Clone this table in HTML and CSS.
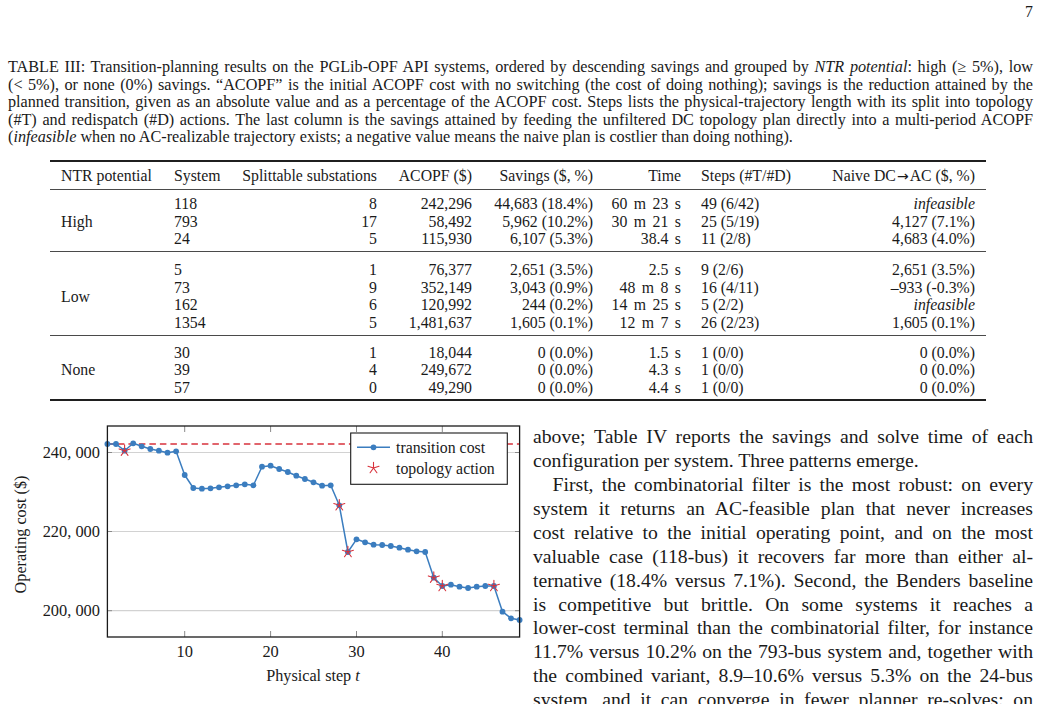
FILE: index.html
```html
<!DOCTYPE html>
<html lang="en">
<head>
<meta charset="utf-8">
<title>Table III</title>
<link rel="stylesheet" href="styles.css">
</head>
<body>
<div class="page">
  <div class="pnum">7</div>

  <p class="caption">
    <span class="line">TABLE III: Transition-planning results on the PGLib-OPF API systems, ordered by descending savings and grouped by <i>NTR potential</i>: high (≥ 5%), low</span>
    <span class="line">(&lt; 5%), or none (0%) savings. “ACOPF” is the initial ACOPF cost with no switching (the cost of doing nothing); savings is the reduction attained by the</span>
    <span class="line">planned transition, given as an absolute value and as a percentage of the ACOPF cost. Steps lists the physical-trajectory length with its split into topology</span>
    <span class="line">(#T) and redispatch (#D) actions. The last column is the savings attained by feeding the unfiltered DC topology plan directly into a multi-period ACOPF</span>
    <span class="line last">(<i>infeasible</i> when no AC-realizable trajectory exists; a negative value means the naive plan is costlier than doing nothing).</span>
  </p>

  <div class="table">
    <div class="grid head">
      <div class="k1">NTR potential</div>
      <div class="k2">System</div>
      <div class="k3">Splittable substations</div>
      <div class="k4">ACOPF ($)</div>
      <div class="k5">Savings ($, %)</div>
      <div class="k6">Time</div>
      <div class="k7">Steps (#T/#D)</div>
      <div class="k8">Naive DC<span class="arr">→</span>AC ($, %)</div>
    </div>

    <div class="grid group g-high">
      <div class="k1 span3">High</div>
      <div class="k2">118</div><div class="k3">8</div><div class="k4">242,296</div><div class="k5">44,683 (18.4%)</div><div class="k6">60 m 23 s</div><div class="k7">49 (6/42)</div><div class="k8"><i>infeasible</i></div>
      <div class="k2">793</div><div class="k3">17</div><div class="k4">58,492</div><div class="k5">5,962 (10.2%)</div><div class="k6">30 m 21 s</div><div class="k7">25 (5/19)</div><div class="k8">4,127 (7.1%)</div>
      <div class="k2">24</div><div class="k3">5</div><div class="k4">115,930</div><div class="k5">6,107 (5.3%)</div><div class="k6">38.4 s</div><div class="k7">11 (2/8)</div><div class="k8">4,683 (4.0%)</div>
    </div>

    <div class="grid group g-low">
      <div class="k1 span4">Low</div>
      <div class="k2">5</div><div class="k3">1</div><div class="k4">76,377</div><div class="k5">2,651 (3.5%)</div><div class="k6">2.5 s</div><div class="k7">9 (2/6)</div><div class="k8">2,651 (3.5%)</div>
      <div class="k2">73</div><div class="k3">9</div><div class="k4">352,149</div><div class="k5">3,043 (0.9%)</div><div class="k6">48 m 8 s</div><div class="k7">16 (4/11)</div><div class="k8">–933 (-0.3%)</div>
      <div class="k2">162</div><div class="k3">6</div><div class="k4">120,992</div><div class="k5">244 (0.2%)</div><div class="k6">14 m 25 s</div><div class="k7">5 (2/2)</div><div class="k8"><i>infeasible</i></div>
      <div class="k2">1354</div><div class="k3">5</div><div class="k4">1,481,637</div><div class="k5">1,605 (0.1%)</div><div class="k6">12 m 7 s</div><div class="k7">26 (2/23)</div><div class="k8">1,605 (0.1%)</div>
    </div>

    <div class="grid group g-none">
      <div class="k1 span3">None</div>
      <div class="k2">30</div><div class="k3">1</div><div class="k4">18,044</div><div class="k5">0 (0.0%)</div><div class="k6">1.5 s</div><div class="k7">1 (0/0)</div><div class="k8">0 (0.0%)</div>
      <div class="k2">39</div><div class="k3">4</div><div class="k4">249,672</div><div class="k5">0 (0.0%)</div><div class="k6">4.3 s</div><div class="k7">1 (0/0)</div><div class="k8">0 (0.0%)</div>
      <div class="k2">57</div><div class="k3">0</div><div class="k4">49,290</div><div class="k5">0 (0.0%)</div><div class="k6">4.4 s</div><div class="k7">1 (0/0)</div><div class="k8">0 (0.0%)</div>
    </div>
  </div>

  <div class="lower">
    <svg class="chart" width="517" height="278" viewBox="8 426 517 278" xmlns="http://www.w3.org/2000/svg">
      <defs>
        <g id="star">
          <path d="M0 0 L0 -5.8 M0 0 L-5.5 -1.8 M0 0 L-3.4 4.7 M0 0 L3.4 4.7 M0 0 L5.5 -1.8" stroke="#d8323c" stroke-width="1.1" fill="none" stroke-linecap="round"/>
        </g>
      </defs>
      <!-- grid -->
      <g stroke="#d2d2d2" stroke-width="1.2">
        <line x1="107.4" y1="453.5" x2="519.6" y2="453.5"/>
        <line x1="107.4" y1="532.5" x2="519.6" y2="532.5"/>
        <line x1="107.4" y1="611.7" x2="519.6" y2="611.7"/>
      </g>
      <!-- ticks -->
      <g stroke="#8a8a8a" stroke-width="1">
        <line x1="107.4" y1="453.5" x2="112" y2="453.5"/>
        <line x1="107.4" y1="532.5" x2="112" y2="532.5"/>
        <line x1="107.4" y1="611.7" x2="112" y2="611.7"/>
        <line x1="515" y1="453.5" x2="519.6" y2="453.5"/>
        <line x1="515" y1="532.5" x2="519.6" y2="532.5"/>
        <line x1="515" y1="611.7" x2="519.6" y2="611.7"/>
        <line x1="184.7" y1="638" x2="184.7" y2="632"/>
        <line x1="270.6" y1="638" x2="270.6" y2="632"/>
        <line x1="356.5" y1="638" x2="356.5" y2="632"/>
        <line x1="442.3" y1="638" x2="442.3" y2="632"/>
        <line x1="184.7" y1="427" x2="184.7" y2="433"/>
        <line x1="270.6" y1="427" x2="270.6" y2="433"/>
        <line x1="356.5" y1="427" x2="356.5" y2="433"/>
        <line x1="442.3" y1="427" x2="442.3" y2="433"/>
      </g>
      <!-- reference dashed line -->
      <line x1="107.4" y1="445" x2="519.6" y2="445" stroke="#d8323c" stroke-width="1.3" stroke-dasharray="6.5 4"/>
      <!-- data -->
      <polyline fill="none" stroke="#3b7dbf" stroke-width="1.5" stroke-linejoin="round"
        points="107.4,445 116.0,445 124.6,451.7 133.2,444.3 141.7,447.3 150.3,450 158.9,451.7 167.5,453.7 176.1,452.3 184.7,476 193.3,489 201.9,489.7 210.5,489.3 219.0,488.3 227.6,487.3 236.2,486.3 244.8,485.3 253.4,486.3 262.0,467.7 270.6,466.7 279.2,470 287.8,473 296.3,476.7 304.9,480 313.5,483.3 322.1,486.7 330.7,486.3 339.3,506.3 347.9,553 356.5,540.3 365.1,543.3 373.6,545.7 382.2,546 390.8,547 399.4,548.7 408.0,550.7 416.6,552.3 425.2,553 433.8,578.7 442.3,587 450.9,585.7 459.5,587.7 468.1,589 476.7,587.7 485.3,587 493.9,587 502.5,612.7 511.0,619.3 519.6,621"/>
      <g fill="#3b7dbf">
        <circle cx="107.4" cy="445" r="2.9"/><circle cx="116.0" cy="445" r="2.9"/><circle cx="124.6" cy="451.7" r="2.9"/><circle cx="133.2" cy="444.3" r="2.9"/><circle cx="141.7" cy="447.3" r="2.9"/><circle cx="150.3" cy="450" r="2.9"/><circle cx="158.9" cy="451.7" r="2.9"/><circle cx="167.5" cy="453.7" r="2.9"/><circle cx="176.1" cy="452.3" r="2.9"/><circle cx="184.7" cy="476" r="2.9"/>
        <circle cx="193.3" cy="489" r="2.9"/><circle cx="201.9" cy="489.7" r="2.9"/><circle cx="210.5" cy="489.3" r="2.9"/><circle cx="219.0" cy="488.3" r="2.9"/><circle cx="227.6" cy="487.3" r="2.9"/><circle cx="236.2" cy="486.3" r="2.9"/><circle cx="244.8" cy="485.3" r="2.9"/><circle cx="253.4" cy="486.3" r="2.9"/><circle cx="262.0" cy="467.7" r="2.9"/><circle cx="270.6" cy="466.7" r="2.9"/>
        <circle cx="279.2" cy="470" r="2.9"/><circle cx="287.8" cy="473" r="2.9"/><circle cx="296.3" cy="476.7" r="2.9"/><circle cx="304.9" cy="480" r="2.9"/><circle cx="313.5" cy="483.3" r="2.9"/><circle cx="322.1" cy="486.7" r="2.9"/><circle cx="330.7" cy="486.3" r="2.9"/><circle cx="339.3" cy="506.3" r="2.9"/><circle cx="347.9" cy="553" r="2.9"/><circle cx="356.5" cy="540.3" r="2.9"/>
        <circle cx="365.1" cy="543.3" r="2.9"/><circle cx="373.6" cy="545.7" r="2.9"/><circle cx="382.2" cy="546" r="2.9"/><circle cx="390.8" cy="547" r="2.9"/><circle cx="399.4" cy="548.7" r="2.9"/><circle cx="408.0" cy="550.7" r="2.9"/><circle cx="416.6" cy="552.3" r="2.9"/><circle cx="425.2" cy="553" r="2.9"/><circle cx="433.8" cy="578.7" r="2.9"/><circle cx="442.3" cy="587" r="2.9"/>
        <circle cx="450.9" cy="585.7" r="2.9"/><circle cx="459.5" cy="587.7" r="2.9"/><circle cx="468.1" cy="589" r="2.9"/><circle cx="476.7" cy="587.7" r="2.9"/><circle cx="485.3" cy="587" r="2.9"/><circle cx="493.9" cy="587" r="2.9"/><circle cx="502.5" cy="612.7" r="2.9"/><circle cx="511.0" cy="619.3" r="2.9"/><circle cx="519.6" cy="621" r="2.9"/>
      </g>
      <!-- topology actions -->
      <use href="#star" x="124.6" y="451.7"/>
      <use href="#star" x="339.3" y="506.3"/>
      <use href="#star" x="347.9" y="553"/>
      <use href="#star" x="433.8" y="578.7"/>
      <use href="#star" x="442.3" y="587"/>
      <use href="#star" x="493.9" y="587"/>
      <!-- frame -->
      <rect x="107.4" y="427" width="412.2" height="211" fill="none" stroke="#1a1a1a" stroke-width="1.3"/>
      <!-- legend -->
      <rect x="350.7" y="434" width="156.6" height="51.3" fill="#fff" stroke="#1a1a1a" stroke-width="1.1"/>
      <line x1="357" y1="448.3" x2="390" y2="448.3" stroke="#3b7dbf" stroke-width="1.5"/>
      <circle cx="373.5" cy="448.3" r="2.9" fill="#3b7dbf"/>
      <use href="#star" x="373.5" y="469"/>
      <text class="lg" x="396" y="453.8">transition cost</text>
      <text class="lg" x="396" y="474.5">topology action</text>
      <!-- axis labels -->
      <g class="tk">
        <text x="100" y="459" text-anchor="end">240, 000</text>
        <text x="100" y="538" text-anchor="end">220, 000</text>
        <text x="100" y="617" text-anchor="end">200, 000</text>
        <text x="184.7" y="657.5" text-anchor="middle">10</text>
        <text x="270.6" y="657.5" text-anchor="middle">20</text>
        <text x="356.5" y="657.5" text-anchor="middle">30</text>
        <text x="442.3" y="657.5" text-anchor="middle">40</text>
      </g>
      <text class="al" x="313" y="682" text-anchor="middle">Physical step <tspan font-style="italic">t</tspan></text>
      <text class="al" x="0" y="0" text-anchor="middle" transform="translate(25.5 535.5) rotate(-90)">Operating cost ($)</text>
    </svg>

    <div class="body">
      <p class="para first">
        <span class="line">above; Table IV reports the savings and solve time of each</span>
        <span class="line last">configuration per system. Three patterns emerge.</span>
      </p>
      <p class="para indent">
        <span class="line">First, the combinatorial filter is the most robust: on every</span>
        <span class="line">system it returns an AC-feasible plan that never increases</span>
        <span class="line">cost relative to the initial operating point, and on the most</span>
        <span class="line">valuable case (118-bus) it recovers far more than either al-</span>
        <span class="line">ternative (18.4% versus 7.1%). Second, the Benders baseline</span>
        <span class="line">is competitive but brittle. On some systems it reaches a</span>
        <span class="line">lower-cost terminal than the combinatorial filter, for instance</span>
        <span class="line">11.7% versus 10.2% on the 793-bus system and, together with</span>
        <span class="line">the combined variant, 8.9–10.6% versus 5.3% on the 24-bus</span>
        <span class="line">system, and it can converge in fewer planner re-solves; on</span>
      </p>
    </div>
  </div>
</div>
</body>
</html>
```

FILE: styles.css
```css
html, body {
  margin: 0;
  padding: 0;
  background: #ffffff;
  overflow: hidden;
  height: 704px;
}

body {
  font-family: "Liberation Serif", "Times New Roman", serif;
  color: #1a1a1a;
}

.page {
  width: 1041px;
  box-sizing: border-box;
  padding: 0 8px;
}

.pnum {
  margin-top: 3px;
  font-size: 15.8px;
  line-height: 18px;
  text-align: right;
  padding-right: 0;
}

.line {
  display: block;
  white-space: nowrap;
  text-align: justify;
  text-align-last: justify;
}

.line.last {
  text-align-last: left;
}

.caption {
  margin: 38px 0 0 0;
  font-size: 16.2px;
  line-height: 17.6px;
}

/* ---------- table ---------- */
.table {
  margin: 13.5px 0 0 42px;
  width: 936px;
  font-size: 15.8px;
  border-top: 2px solid #1f1f1f;
  border-bottom: 2px solid #1f1f1f;
}

.grid {
  display: grid;
  grid-template-columns: 114px 66px 157.5px 91px 120px 92.5px 125px 170px;
  grid-auto-rows: 17.4px;
  line-height: 17.4px;
  white-space: nowrap;
}

.head {
  padding: 5px 0 4.4px;
}

.group {
  border-top: 1px solid #4a4a4a;
}

.g-high { padding: 5px 0 4px; }
.g-low  { padding: 9px 0 4.5px; }
.g-none { padding: 7.5px 0 3px; }

.span3 { grid-row: span 3; align-self: center; }
.span4 { grid-row: span 4; align-self: center; }

.k1 { padding-left: 11px; }
.k2 { padding-left: 10px; }
.k3 { text-align: right; padding-right: 10.5px; }
.k4 { text-align: right; padding-right: 6.5px; }
.k5 { text-align: right; padding-right: 5.5px; }
.k6 { text-align: right; padding-right: 10px; word-spacing: 2.5px; }
.k7 { padding-left: 10px; }
.k8 { text-align: right; padding-right: 11px; }

.arr {
  font-family: "DejaVu Sans", sans-serif;
  font-size: 14px;
  padding: 0 1px;
}

/* ---------- lower part ---------- */
.lower {
  display: flex;
  gap: 8px;
  margin-top: 24px;
  align-items: flex-start;
}

.chart {
  display: block;
  flex: 0 0 517px;
}

.chart .tk {
  font-family: "Liberation Serif", "DejaVu Serif", serif;
  font-size: 16.4px;
  fill: #1a1a1a;
}

.chart .lg {
  font-family: "Liberation Serif", serif;
  font-size: 15.8px;
  fill: #1a1a1a;
}

.chart .al {
  font-family: "Liberation Serif", serif;
  font-size: 16.2px;
  fill: #1a1a1a;
}

.body {
  flex: 0 0 500px;
  font-size: 19.7px;
  line-height: 23.9px;
}

.para {
  margin: 0;
}

.para.indent .line:first-child {
  text-indent: 19.5px;
}
```
